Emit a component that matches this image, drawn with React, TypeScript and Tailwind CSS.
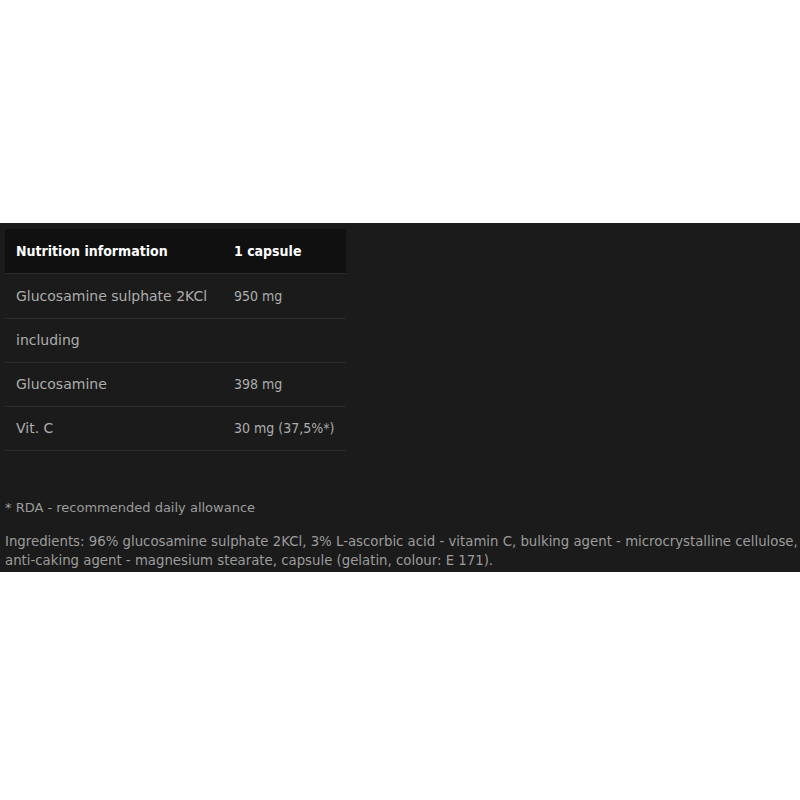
import React from "react";

const rows: [string, string, string][] = [
  ["Glucosamine sulphate 2KCl", "950 mg", "h-[45px]"],
  ["including", "", "h-[44px]"],
  ["Glucosamine", "398 mg", "h-[44px]"],
  ["Vit. C", "30 mg (37,5%*)", "h-[44px]"],
];

export default function App() {
  return (
    <div className="w-[800px] h-[800px] bg-white flex flex-col" style={{ fontFamily: '"DejaVu Sans", sans-serif' }}>
      <div className="h-[223px] shrink-0" />
      <div className="h-[349px] shrink-0 bg-[#1b1b1b] pt-[6px] pl-[5px] flex flex-col">
        <div className="w-[341px] flex flex-col">
          <div className="h-[44px] bg-[#101010] flex items-center text-[14px] font-bold text-white" style={{ fontFamily: '"DejaVu Sans Condensed", "DejaVu Sans", sans-serif' }}>
            <div className="w-[229px] pl-[11px]">Nutrition information</div>
            <div>1 capsule</div>
          </div>
          {rows.map(([a, b, h], i) => (
            <div key={i} className={`${h} border-t border-[#2c2c2c] flex items-center text-[#adadad] text-[14px]`}>
              <div className="w-[229px] pl-[11px] whitespace-nowrap">{a}</div>
              <div className="whitespace-nowrap" style={{ fontFamily: '"DejaVu Sans Condensed", "DejaVu Sans", sans-serif' }}>{b}</div>
            </div>
          ))}
          <div className="border-t border-[#2c2c2c]" />
        </div>
        <div className="mt-[47px] text-[13px] leading-[19px] text-[#9c9c9c] whitespace-nowrap">* RDA - recommended daily allowance</div>
        <div className="mt-[15px] text-[13.3px] leading-[19px] text-[#9c9c9c] whitespace-nowrap">
          Ingredients: 96% glucosamine sulphate 2KCl, 3% L-ascorbic acid - vitamin C, bulking agent - microcrystalline cellulose,
          <br />
          anti-caking agent - magnesium stearate, capsule (gelatin, colour: E 171).
        </div>
      </div>
      <div className="flex-1" />
    </div>
  );
}
